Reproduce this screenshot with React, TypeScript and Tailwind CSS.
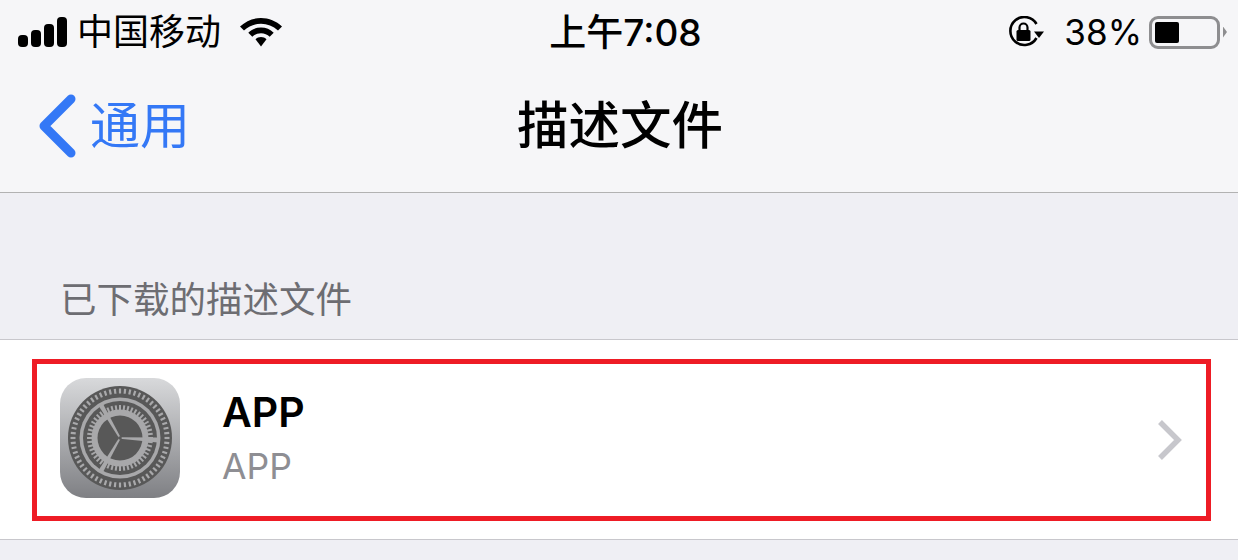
import React from 'react';

const cjk = { fontFamily: 'Inter, "Noto Sans CJK SC", sans-serif' };

const SignalBars = () => (
  <svg width="49" height="30" viewBox="0 0 49 30" className="block">
    <rect x="0" y="18" width="10" height="12" rx="4" fill="#000" />
    <rect x="13" y="13" width="10" height="17" rx="4" fill="#000" />
    <rect x="26" y="7" width="10" height="23" rx="4" fill="#000" />
    <rect x="39" y="0" width="10" height="30" rx="4" fill="#000" />
  </svg>
);

const WifiIcon = () => (
  <svg width="42" height="30" viewBox="0 0 42 30" className="block">
    <path d="M21 1C13 1 6 4 0 9.500L4 13.500C9 9 14.700 6.700 21 6.700S33 9 38 13.500L42 9.500C36 4 29 1 21 1Z" fill="#000" />
    <path d="M21 10.500C16 10.500 11.700 12.300 8.300 15.700L12.300 19.700C14.600 17.400 17.600 16.200 21 16.200S27.400 17.400 29.700 19.700L33.700 15.700C30.300 12.300 26 10.500 21 10.500Z" fill="#000" />
    <path d="M21 20C18.800 20 17 20.800 15.500 22.300L21 29.500L26.500 22.300C25 20.800 23.200 20 21 20Z" fill="#000" />
  </svg>
);

const RotationLock = () => (
  <svg width="36" height="32" viewBox="0 0 36 32" className="block">
    <path d="M28.500 22A14 14 0 1 1 28.500 8" fill="none" stroke="#000" strokeWidth="2.600" />
    <path d="M26 15.500H36L31 22Z" fill="#000" />
    <rect x="8.500" y="14" width="14" height="11" rx="1.500" fill="#000" />
    <path d="M11.500 14V11.500A4 4 0 0 1 19.500 11.500V14" fill="none" stroke="#000" strokeWidth="2.200" />
  </svg>
);

const Battery = () => (
  <div className="flex items-center">
    <div className="flex h-[33px] w-[71px] items-stretch rounded-[9px] border-[3px] border-[#8e8e90] p-[3px]">
      <div className="w-[24px] rounded-[2px] bg-black" />
    </div>
    <div className="ml-[3px] h-[11px] w-[4px] bg-[#8e8e90] [clip-path:polygon(0_0,100%_50%,0_100%)]" />
  </div>
);

const range = (n: number) => Array.from({ length: n }, (_, i) => i);

const SettingsIcon = () => {
  const c = 60;
  const ray = (deg: number, r1: number, r2: number) => {
    const a = (deg * Math.PI) / 180;
    return { x1: c + r1 * Math.cos(a), y1: c + r1 * Math.sin(a), x2: c + r2 * Math.cos(a), y2: c + r2 * Math.sin(a) };
  };
  // spoke: thin at the hub, wider where it meets the ring
  const spoke = (deg: number) => {
    const a = (deg * Math.PI) / 180;
    const px = -Math.sin(a);
    const py = Math.cos(a);
    const pts = [
      [c + px * 0.8, c + py * 0.8],
      [c + 38 * Math.cos(a) + px * 2.4, c + 38 * Math.sin(a) + py * 2.4],
      [c + 38 * Math.cos(a) - px * 2.4, c + 38 * Math.sin(a) - py * 2.4],
      [c - px * 0.8, c - py * 0.8],
    ];
    return pts.map(p => p.join(',')).join(' ');
  };
  return (
    <svg width="120" height="120" viewBox="0 0 120 120" className="mb-[4px] block shrink-0">
      <defs>
        <linearGradient id="gearBg" x1="0" y1="0" x2="0" y2="1">
          <stop offset="0" stopColor="#d8d9db" />
          <stop offset="1" stopColor="#7f8084" />
        </linearGradient>
      </defs>
      <rect width="120" height="120" rx="26" fill="url(#gearBg)" />
      <circle cx={c} cy={c} r="52" fill="#585858" />
      {range(60).map(i => (
        <line key={i} {...ray(i * 6, 44.500, 49.500)} stroke="#a9a9ab" strokeWidth="2.200" />
      ))}
      <circle cx={c} cy={c} r="40.500" fill="#a8a8aa" />
      <circle cx={c} cy={c} r="37" fill="#585858" />
      {range(48).map(i => (
        <line key={i} {...ray(i * 7.500, 28, 33)} stroke="#a8a8aa" strokeWidth="2" />
      ))}
      <circle cx={c} cy={c} r="28.500" fill="#a8a8aa" />
      <circle cx={c} cy={c} r="22.500" fill="#585858" />
      {[3, 120, 240].map(d => (
        <polygon key={d} points={spoke(d)} fill="#a8a8aa" />
      ))}
      <circle cx={c} cy={c} r="1.800" fill="#585858" />
    </svg>
  );
};

export default function App() {
  return (
    <div className="h-[560px] w-[1238px] overflow-hidden bg-[#efeff4] text-black" style={cjk}>
      <header className="h-[193px] border-b border-[#b2b2b2] bg-[#f6f6f8]">
        <div className="grid h-[64px] grid-cols-[1fr_auto_1fr] items-center pl-[18px] pr-[11px]">
          <div className="flex items-center">
            <SignalBars />
            <span className="ml-[10px] text-[36px] leading-none">中国移动</span>
            <span className="ml-[19px]"><WifiIcon /></span>
          </div>
          <div className="ml-[6px] text-[37px] font-medium leading-none">上午7:08</div>
          <div className="flex items-center justify-end">
            <RotationLock />
            <span className="ml-[20px] mr-[7px] text-[35px] leading-none">38%</span>
            <Battery />
          </div>
        </div>
        <div className="grid h-[120px] grid-cols-[1fr_auto_1fr] items-center pl-[38px] pr-[38px] pt-[4px]">
          <div className="flex items-center text-[#3478f6]">
            <svg width="38" height="64" viewBox="0 0 38 64" className="block">
              <path d="M33 5L6 32L33 59" fill="none" stroke="#3478f6" strokeWidth="9" strokeLinecap="round" strokeLinejoin="round" />
            </svg>
            <span className="ml-[14px] text-[50px] leading-none">通用</span>
          </div>
          <h1 className="ml-[2px] text-[51.5px] font-medium leading-none">描述文件</h1>
          <div />
        </div>
      </header>

      <div className="flex h-[146px] items-end pb-[21px] pl-[60px] text-[36.5px] leading-none text-[#6d6d72]">已下载的描述文件</div>

      <section className="h-[201px] border-y border-[#c8c7cc] bg-white pb-[19px] pl-[32px] pr-[27px] pt-[19px]">
        <div className="flex h-[162px] items-center border-[5px] border-[#ee1c25] pl-[23px] pr-[23px]">
          <SettingsIcon />
          <div className="ml-[42px] flex-1">
            <div className="-mt-[4px] text-[41px] font-semibold leading-[46px]">APP</div>
            <div className="mt-[12px] text-[35.5px] leading-[40px] text-[#8e8e93]">APP</div>
          </div>
          <svg width="26" height="40" viewBox="0 0 26 40" className="block">
            <path d="M3 2L21 20L3 38" fill="none" stroke="#c7c7cc" strokeWidth="5.500" />
          </svg>
        </div>
      </section>
    </div>
  );
}
